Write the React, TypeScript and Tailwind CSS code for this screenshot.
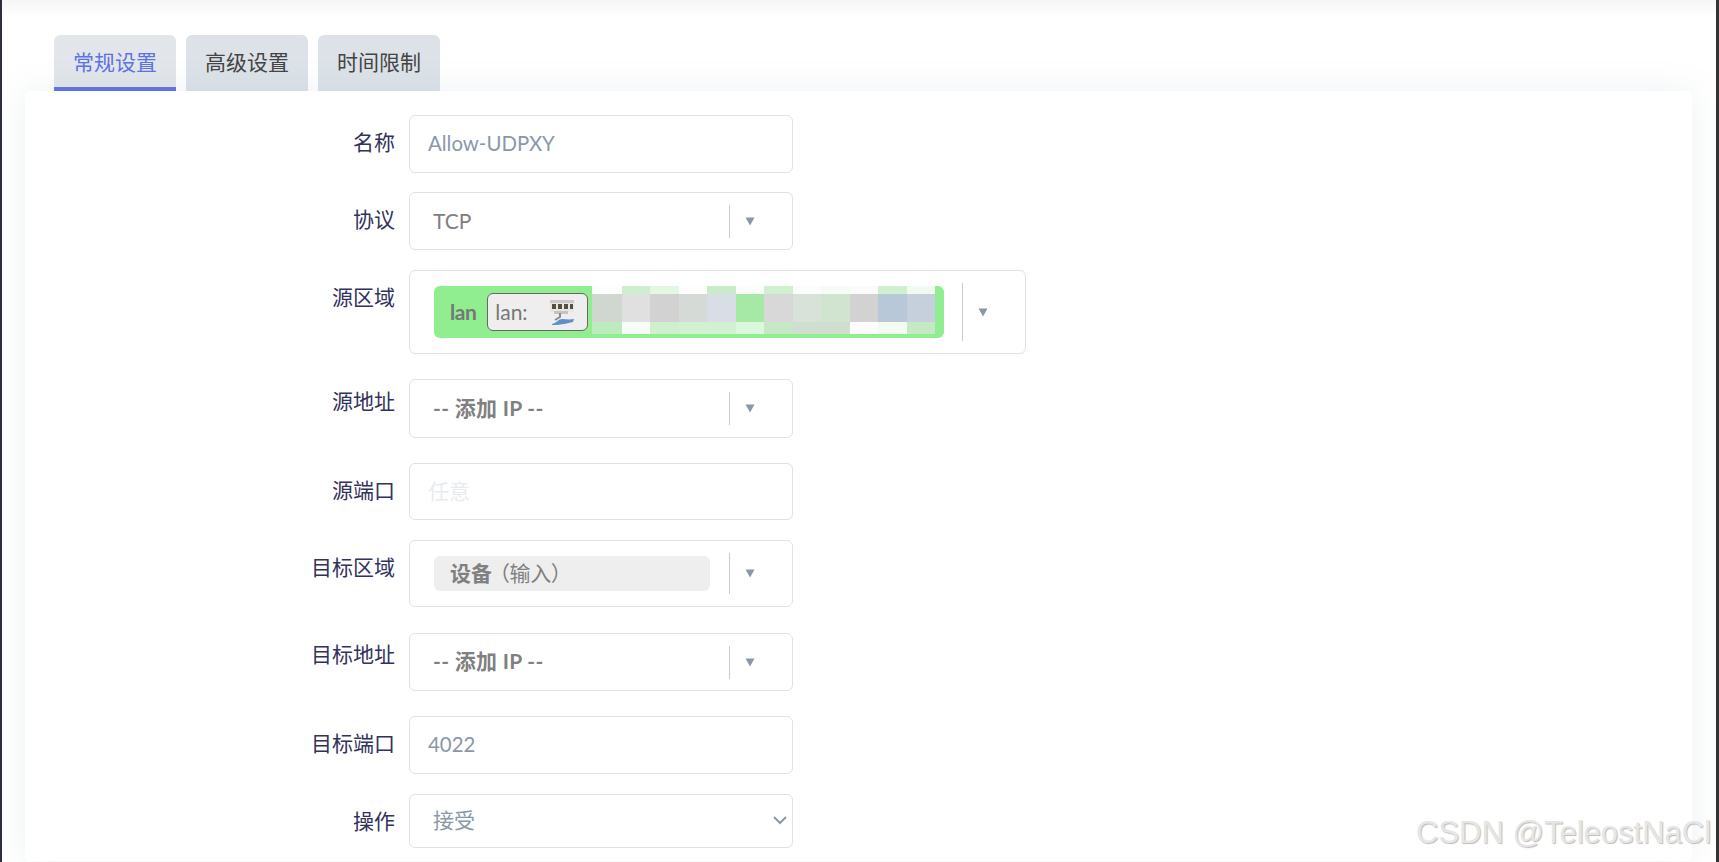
const sans = "font-['Lato','Noto_Sans_CJK_SC',sans-serif]";

const mosaic: string[][] = [
  ["#fdfdfd", "#cfeecf", "#e2f8e2", "#fdfdfd", "#c8ebc8", "#fbfdfb", "#d0f0d0", "#fcfcfc", "#f6fbf6", "#fbfbfb", "#cfefcf", "#f0faf0"],
  ["#d0d6d0", "#e0e0e0", "#d2d2d2", "#d6dad6", "#d9dde5", "#a6e8a6", "#d8d8d8", "#d8e2d8", "#d0e4d0", "#d2d2d2", "#b8c8d8", "#c6d0dc"],
  ["#bdebbd", "#f6fcf6", "#cfefcf", "#d2f0d2", "#d2f0d2", "#dcf8dc", "#c6e8c6", "#cfdecf", "#cfdecf", "#fdfdfd", "#f2fcf2", "#c5e8c5"],
];

function Caret() {
  return (
    <svg width="10" height="9" viewBox="0 0 10 9" className="shrink-0">
      <path d="M0.5 0.5H9.5L5 8.5Z" fill="#8898aa" />
    </svg>
  );
}

function Row({ label, children, mt, labelMt = "mt-[12px]" }: { label: string; children: React.ReactNode; mt: string; labelMt?: string }) {
  return (
    <div className={`flex items-start ${mt}`}>
      <div className={`w-[384px] shrink-0 pr-[14px] text-right text-[21px] leading-[30px] text-[#32325d] ${labelMt}`}>{label}</div>
      {children}
    </div>
  );
}

function TextBox({ text, h, color = "text-[#8898aa]", size = "text-[21px]" }: { text: string; h: string; color?: string; size?: string }) {
  return (
    <div className={`w-[384px] ${h} flex items-center rounded-[6px] border border-[#dee2e6] bg-white pb-[2px] pl-[18px] ${size} ${color}`}>{text}</div>
  );
}

function DropBox({ h, bold, text, children, dividerH = "h-[33px]" }: { h: string; bold?: boolean; text?: string; children?: React.ReactNode; dividerH?: string }) {
  return (
    <div className={`w-[384px] ${h} flex items-center rounded-[6px] border border-[#dee2e6] bg-white pl-[23px]`}>
      <div className={`flex-1 text-[21px] text-[#808080] ${bold ? "pb-[2px] font-bold tracking-[0.3px]" : "pb-[1px]"}`}>{text}{children}</div>
      <div className={`ml-[18px] w-px ${dividerH} bg-[#c8cbcf]`} />
      <div className="flex w-[62px] justify-start pl-[15px]"><Caret /></div>
    </div>
  );
}

export default function App() {
  return (
    <div className={`relative h-[862px] w-[1719px] overflow-hidden border-l-2 border-r-[3px] border-l-[#2f2f3a] border-r-[#333333] bg-white ${sans}`}>
      <div className="h-[35px] bg-gradient-to-b from-[#f6f6f7] via-white to-white" />
      <div className="flex gap-[10px] pl-[52px]">
        <div className="flex h-[56px] w-[122px] items-center justify-center rounded-t-[6px] border-b-4 border-[#5e72e4] bg-[#e2e6eb] pb-[1px] pt-[2px] text-[21px] text-[#5e72e4]">常规设置</div>
        <div className="flex h-[56px] w-[122px] items-center justify-center rounded-t-[6px] bg-[#dce2e8] pb-[3px] text-[21px] text-[#444444]">高级设置</div>
        <div className="flex h-[56px] w-[122px] items-center justify-center rounded-t-[6px] bg-[#dce2e8] pb-[3px] text-[21px] text-[#444444]">时间限制</div>
      </div>
      <div className="relative ml-[23px] h-[770px] w-[1667px] rounded-[6px] bg-white pt-[24px] shadow-[0_0_32px_rgba(136,152,170,0.15)]">
        <Row label="名称" mt="mt-0"><TextBox text="Allow-UDPXY" h="h-[58px]" size="text-[20.4px]" /></Row>
        <Row label="协议" mt="mt-[19px]"><DropBox h="h-[58px]" text="TCP" /></Row>
        <Row label="源区域" mt="mt-[20px]">
          <div className="flex h-[84px] w-[617px] items-center rounded-[6px] border border-[#dee2e6] bg-white pl-[24px]">
            <div className="relative flex h-[52px] w-[510px] items-center overflow-hidden rounded-[6px] bg-[#90ee90] pl-[16px]">
              <span className="text-[21px] font-bold tracking-[-0.5px] text-[#777777]">lan</span>
              <div className="ml-[11px] flex h-[38px] w-[101px] items-center justify-between rounded-[6px] border border-[#666666] bg-[#eeeeee] pl-[7px] pr-[12px] text-[21px] text-[#777777]">
                <span>lan:</span>
                <svg width="26" height="28" viewBox="0 0 26 28">
                  <rect x="1" y="2" width="24" height="3" fill="#c8c8c8" />
                  <rect x="1" y="5" width="24" height="9" fill="#e6e6e2" />
                  <rect x="3" y="6" width="4" height="5" fill="#55503a" />
                  <rect x="9" y="6" width="4" height="5" fill="#55503a" />
                  <rect x="15" y="6" width="4" height="5" fill="#55503a" />
                  <rect x="21" y="6" width="3" height="5" fill="#55503a" />
                  <rect x="5" y="13" width="14" height="3" fill="#c4c4bc" />
                  <path d="M11 15L11 19L6 22" stroke="#8a8a8a" strokeWidth="2" fill="none" />
                  <path d="M3 26C8 25 9 21 13 21C17 21 20 22 25 21L24 24C18 25 14 27 3 27Z" fill="#5f8fc8" />
                </svg>
              </div>
              <div className="absolute left-[158px] top-0 grid grid-cols-[29.5px_repeat(11,28.5px)] grid-rows-[8px_28px_12px]">
                {mosaic.flat().map((c, i) => (
                  <div key={i} style={{ backgroundColor: c }} />
                ))}
              </div>
            </div>
            <div className="ml-[18px] h-[58px] w-px bg-[#c8cbcf]" />
            <div className="pl-[15px]"><Caret /></div>
          </div>
        </Row>
        <Row label="源地址" mt="mt-[25px]" labelMt="mt-[7px]"><DropBox h="h-[59px]" bold text="-- 添加 IP --" /></Row>
        <Row label="源端口" mt="mt-[25px]"><TextBox text="任意" h="h-[57px]" color="text-[#e9ecef]" /></Row>
        <Row label="目标区域" mt="mt-[20px]">
          <DropBox h="h-[67px]" dividerH="h-[41px]">
            <div className="ml-[1px] flex h-[35px] w-[276px] items-center rounded-[6px] bg-[#eeeeee] pb-[1px] pl-[16px]">
              <span className="font-bold">设备</span>
              <span className="-ml-[3px] font-normal tracking-[-0.4px]">（输入）</span>
            </div>
          </DropBox>
        </Row>
        <Row label="目标地址" mt="mt-[26px]" labelMt="mt-[6px]"><DropBox h="h-[58px]" bold text="-- 添加 IP --" /></Row>
        <Row label="目标端口" mt="mt-[25px]"><TextBox text="4022" h="h-[58px]" size="text-[20.4px]" /></Row>
        <Row label="操作" mt="mt-[20px]">
          <div className="flex h-[54px] w-[384px] items-center justify-between rounded-[6px] border border-[#dee2e6] bg-white pb-[2px] pl-[23px] pr-[4px] text-[21px] text-[#8898aa]">
            <span>接受</span>
            <svg width="16" height="10" viewBox="0 0 16 10"><path d="M2 2L8 8L14 2" stroke="#8898aa" strokeWidth="2" fill="none" /></svg>
          </div>
        </Row>
      </div>
      <div className="absolute left-[1414px] top-[813px] whitespace-nowrap font-['Liberation_Sans',sans-serif] text-[31px] leading-[40px] text-[#e6e6e6] [text-shadow:1px_1px_1px_#bcbcbc]">CSDN @TeleostNaCl</div>
    </div>
  );
}
